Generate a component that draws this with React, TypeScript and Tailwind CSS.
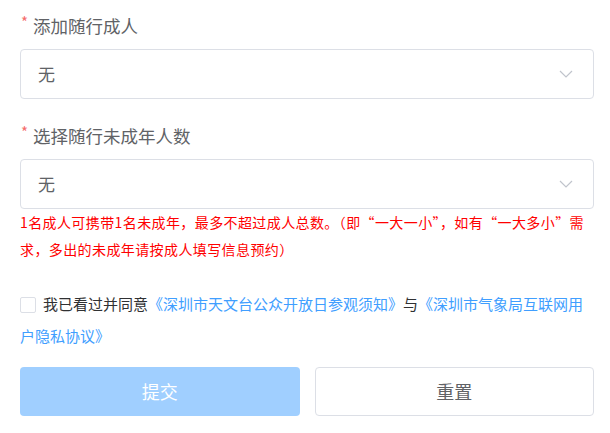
import React from "react";

function Chevron() {
  return (
    <svg width="14" height="8" viewBox="0 0 14 8" fill="none" className="shrink-0">
      <path d="M1 1l6 6 6-6" stroke="#c0c4cc" strokeWidth="1.2" />
    </svg>
  );
}

function Select() {
  return (
    <div className="flex h-[50px] items-center justify-between rounded-[4px] border border-[#dcdfe6] bg-white pl-[17px] pr-[20px]">
      <span className="text-[17px] text-[#606266]">无</span>
      <Chevron />
    </div>
  );
}

function Label({ text }: { text: string }) {
  return (
    <div className="flex h-6 items-center leading-6">
      <span className="mr-[5px] -mt-[8px] ml-[1px] text-[15px] text-[#f56c6c]">*</span>
      <span className="text-[17.5px] text-[#606266]">{text}</span>
    </div>
  );
}

export default function App() {
  return (
    <div
      className="w-[610px] h-[433px] bg-white pl-5 pr-4 pt-[14px]"
      style={{ fontFamily: '"Noto Sans CJK SC", "Noto Sans", sans-serif' }}
    >
      <Label text="添加随行成人" />
      <div className="mt-[11px]">
        <Select />
      </div>
      <div className="mt-[25px]">
        <Label text="选择随行未成年人数" />
      </div>
      <div className="mt-[11px]">
        <Select />
      </div>
      <p className="text-[14px] leading-[27px] tracking-[0.4px] text-[#ff0000]">
        1名成人可携带1名未成年，最多不超过成人总数。（即“一大一小”，如有“一大多小”需求，多出的未成年请按成人填写信息预约）
      </p>
      <p className="mt-[25px] text-[15px] leading-[32px] text-[#303133]">
        <span className="mr-[7px] inline-block h-4 w-4 rounded-[2px] border border-[#dcdfe6] bg-white align-[-3px]" />
        我已看过并同意
        <span className="text-[#409eff]">《深圳市天文台公众开放日参观须知》</span>与
        <span className="text-[#409eff]">《深圳市气象局互联网用户隐私协议》</span>
      </p>
      <div className="mt-[15px] grid grid-cols-2 gap-[15px]">
        <button className="h-[49px] rounded-[4px] bg-[#a0cfff] text-[18px] text-white">提交</button>
        <button className="h-[49px] rounded-[4px] border border-[#dcdfe6] bg-white text-[18px] text-[#606266]">
          重置
        </button>
      </div>
    </div>
  );
}
